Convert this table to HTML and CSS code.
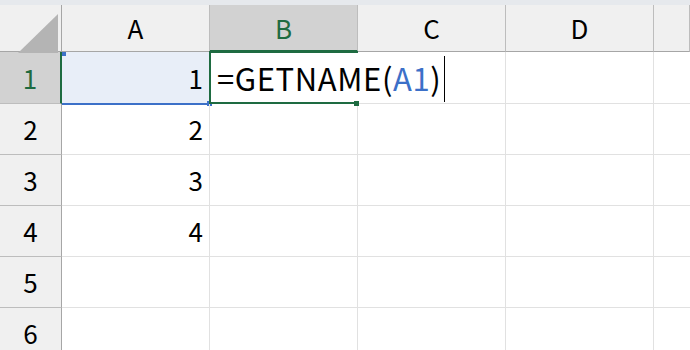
FILE: index.html
```html
<!DOCTYPE html>
<html lang="ja">
<head>
    <meta charset="UTF-8">
    <title>Sheet1</title>
    <link rel="stylesheet" href="styles.css">
</head>
<body>
    <div class="topbar"></div>
    <div class="grid">
        <!-- cabecera de columnas -->
        <div class="corner"><span class="tri"></span></div>
        <div class="colhead">A</div>
        <div class="colhead sel">B</div>
        <div class="colhead">C</div>
        <div class="colhead">D</div>
        <div class="colhead last"></div>

        <!-- fila 1: A1 referenciada, B1 en edición -->
        <div class="rowhead sel">1</div>
        <div class="cell num ref">1
            <span class="ref-dot tl"></span>
            <span class="ref-line"></span>
            <span class="ref-dot br"></span>
        </div>
        <div class="cell active">
            <div class="editor">=GETNAME(<span class="arg">A1</span>)<span class="caret"></span></div>
            <span class="frame"></span>
            <span class="handle"></span>
        </div>
        <div class="cell"></div>
        <div class="cell"></div>
        <div class="cell last"></div>

        <div class="rowhead">2</div>
        <div class="cell num">2</div>
        <div class="cell"></div>
        <div class="cell"></div>
        <div class="cell"></div>
        <div class="cell last"></div>

        <div class="rowhead">3</div>
        <div class="cell num">3</div>
        <div class="cell"></div>
        <div class="cell"></div>
        <div class="cell"></div>
        <div class="cell last"></div>

        <div class="rowhead">4</div>
        <div class="cell num">4</div>
        <div class="cell"></div>
        <div class="cell"></div>
        <div class="cell"></div>
        <div class="cell last"></div>

        <div class="rowhead">5</div>
        <div class="cell"></div>
        <div class="cell"></div>
        <div class="cell"></div>
        <div class="cell"></div>
        <div class="cell last"></div>

        <div class="rowhead">6</div>
        <div class="cell"></div>
        <div class="cell"></div>
        <div class="cell"></div>
        <div class="cell"></div>
        <div class="cell last"></div>
    </div>
</body>
</html>
```

FILE: styles.css
```css
body {
    margin: 0;
    width: 690px;
    height: 350px;
    overflow: hidden;
    background: white;
    font-family: "Noto Sans CJK JP", sans-serif;
    color: #000;
}

.topbar {
    height: 5px;
    background-color: #e6e9ed;
}

.grid {
    display: grid;
    grid-template-columns: 62px 148px 148px 148px 148px 36px;
    grid-template-rows: 47px 52px repeat(5, 51px);
}

.grid > div {
    box-sizing: border-box;
}

/* cabeceras */
.corner {
    background-color: #f0f0f0;
    border-right: 1px solid #a6a6a6;
    border-bottom: 1px solid #a6a6a6;
    position: relative;
}

.tri {
    position: absolute;
    left: 18px;
    top: 9px;
    width: 40px;
    height: 39px;
    background-color: #b4b4b4;
    clip-path: polygon(100% 0, 100% 100%, 0 100%);
}

.colhead {
    background-color: #f0f0f0;
    border-right: 1px solid #bdbdbd;
    border-bottom: 1px solid #a6a6a6;
    font-size: 26px;
    text-align: center;
    line-height: 46px;
}

.colhead.sel {
    background-color: #d2d2d2;
    color: #1e6b41;
    border-bottom: 2px solid #1e6b41;
}

.rowhead {
    background-color: #f0f0f0;
    border-right: 1px solid #a6a6a6;
    border-bottom: 1px solid #bdbdbd;
    font-size: 26px;
    text-align: center;
    line-height: 50px;
}

.rowhead.sel {
    background-color: #d2d2d2;
    color: #1e6b41;
    border-right: 2px solid #1e6b41;
    line-height: 51px;
}

/* celdas */
.cell {
    border-right: 1px solid #e1e1e1;
    border-bottom: 1px solid #e1e1e1;
    font-size: 26px;
    line-height: 50px;
    position: relative;
}

.cell.last {
    border-right: none;
}

.cell.num {
    text-align: right;
    padding-right: 6px;
}

.cell.ref {
    background-color: #e8eef8;
    line-height: 51px;
}

.ref-line {
    position: absolute;
    left: 0;
    right: 0;
    bottom: -2px;
    height: 2px;
    background-color: #3c70c8;
}

.ref-dot {
    position: absolute;
    width: 4px;
    height: 4px;
    background-color: #3c70c8;
}

.ref-dot.tl {
    left: 0;
    top: 0;
}

.ref-dot.br {
    right: -3px;
    bottom: -3px;
    width: 5px;
    height: 5px;
}

/* B1 en modo edición */
.editor {
    position: absolute;
    left: 0;
    top: 0;
    width: 250px;
    height: 51px;
    line-height: 51px;
    background: white;
    padding-left: 7px;
    white-space: nowrap;
    font-size: 31px;
    letter-spacing: 0.6px;
    z-index: 1;
}

.arg {
    color: #3c70c8;
}

.caret {
    display: inline-block;
    width: 1px;
    height: 46px;
    margin-left: 3px;
    vertical-align: -11px;
    background-color: #000;
}

.frame {
    position: absolute;
    left: -1px;
    top: -1px;
    width: 149px;
    height: 53px;
    border: 2px solid #1e6b41;
    border-right: none;
    box-sizing: border-box;
    z-index: 2;
}

.handle {
    position: absolute;
    right: -2px;
    bottom: -3px;
    width: 5px;
    height: 5px;
    background-color: #1e6b41;
    z-index: 3;
}
```
